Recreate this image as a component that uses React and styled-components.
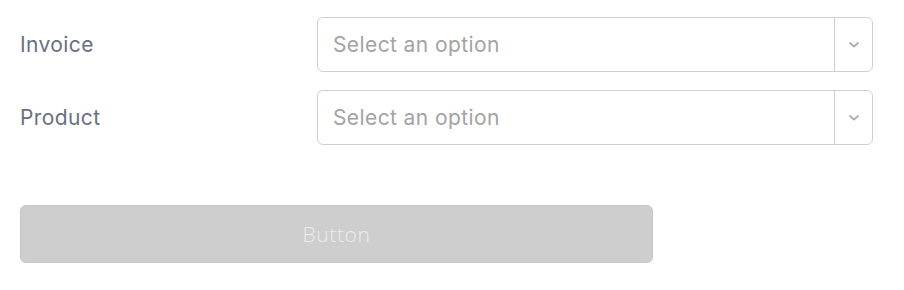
import React from "react";
import styled, { createGlobalStyle } from "styled-components";

const Global = createGlobalStyle`
  html, body { margin: 0; padding: 0; background: #ffffff; }
  body { font-family: Inter, "Noto Sans", sans-serif; }
`;

const Page = styled.div`
  padding: 17px 31px 0 20px;
  display: flex;
  flex-direction: column;
`;

const Fields = styled.div`
  display: flex;
  flex-direction: column;
  gap: 18px;
`;

const Row = styled.div`
  display: grid;
  grid-template-columns: 297px 1fr;
  align-items: center;
`;

const Label = styled.label`
  font-size: 21px;
  font-weight: 400;
  letter-spacing: 0.4px;
  color: #687083;
  line-height: 24px;
`;

const Select = styled.div`
  height: 53px;
  border: 1px solid #cfcfcf;
  border-radius: 6px;
  display: flex;
  align-items: stretch;
  background: #fff;
`;

const Value = styled.div`
  flex: 1;
  display: flex;
  align-items: center;
  padding-left: 15px;
  font-size: 21px;
  letter-spacing: 0.4px;
  color: #a3a3a3;
`;

const Toggle = styled.div`
  width: 37px;
  border-left: 1px solid #cfcfcf;
  display: flex;
  align-items: center;
  justify-content: center;
`;

const Button = styled.button`
  margin-top: 60px;
  width: 633px;
  height: 58px;
  border: 1px solid #c6c6c6;
  border-radius: 6px;
  background: #cecece;
  color: #ebebeb;
  font-family: "Open Sans", sans-serif;
  font-weight: 300;
  font-size: 21px;
  letter-spacing: 0.6px;
  padding: 0;
`;

const Chevron = () => (
  <svg width="10" height="6" viewBox="0 0 10 6" fill="none">
    <path d="M1 1l4 3.5L9 1" stroke="#a6adba" strokeWidth="1.8" strokeLinecap="round" strokeLinejoin="round" />
  </svg>
);

const Field = ({ label }) => (
  <Row>
    <Label>{label}</Label>
    <Select>
      <Value>Select an option</Value>
      <Toggle>
        <Chevron />
      </Toggle>
    </Select>
  </Row>
);

export default function App() {
  return (
    <>
      <Global />
      <Page>
        <Fields>
          <Field label="Invoice" />
          <Field label="Product" />
        </Fields>
        <Button disabled>Button</Button>
      </Page>
    </>
  );
}
